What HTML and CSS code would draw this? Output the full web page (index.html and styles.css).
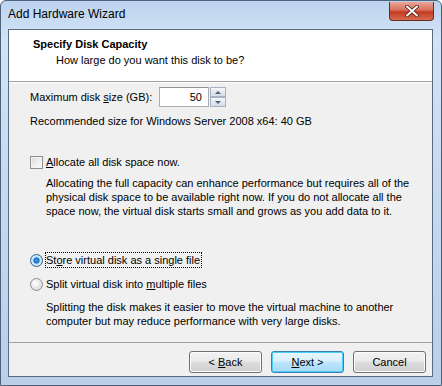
FILE: index.html
```html
<!DOCTYPE html>
<html lang="en">

<head>
    <meta charset="UTF-8">
    <title>Add Hardware Wizard</title>
    <link rel="stylesheet" href="styles.css">
</head>

<body>
    <div class="window">
        <div class="titlebar">
            <span class="title">Add Hardware Wizard</span>
            <div class="closeBtn">
                <svg width="16" height="12" viewBox="0 0 16 12">
                    <path d="M3 1.5 L13 10.5 M13 1.5 L3 10.5" stroke="#4a1410" stroke-width="3.6" stroke-linecap="round" />
                    <path d="M3 1.5 L13 10.5 M13 1.5 L3 10.5" stroke="#ffffff" stroke-width="2" stroke-linecap="round" />
                </svg>
            </div>
        </div>

        <div class="client">
            <div class="header">
                <div class="headerTitle">Specify Disk Capacity</div>
                <div class="headerSub">How large do you want this disk to be?</div>
            </div>

            <div class="contents">
                <div class="sizeRow">
                    <span class="sizeLabel">Maximum disk <u>s</u>ize (GB):</span>
                    <div class="spin">
                        <div class="spinInput">50</div>
                        <div class="spinBtns">
                            <div class="spinBtn"><span class="arrowUp"></span></div>
                            <div class="spinBtn"><span class="arrowDown"></span></div>
                        </div>
                    </div>
                </div>

                <p class="recommend">Recommended size for Windows Server 2008 x64: 40 GB</p>

                <div class="option allocRow">
                    <span class="checkbox"></span>
                    <span><u>A</u>llocate all disk space now.</span>
                </div>
                <p class="desc">Allocating the full capacity can enhance performance but requires all of the
                    physical disk space to be available right now. If you do not allocate all the
                    space now, the virtual disk starts small and grows as you add data to it.</p>

                <div class="option singleRow">
                    <span class="radio checked"></span>
                    <span class="focused">St<u>o</u>re virtual disk as a single file</span>
                </div>
                <div class="option splitRow">
                    <span class="radio"></span>
                    <span>Split virtual disk into <u>m</u>ultiple files</span>
                </div>
                <p class="desc lastDesc">Splitting the disk makes it easier to move the virtual machine to another
                    computer but may reduce performance with very large disks.</p>
            </div>

            <div class="footer">
                <button class="btn">&lt; <u>B</u>ack</button>
                <button class="btn defaultBtn"><u>N</u>ext &gt;</button>
                <button class="btn">Cancel</button>
            </div>
        </div>
    </div>
</body>

</html>
```

FILE: styles.css
```css
body {
    margin: 0;
    font-family: "Liberation Sans", Arial, sans-serif;
    font-size: 11px;
    color: #000;
}

.window {
    width: 442px;
    height: 386px;
    box-sizing: border-box;
    padding: 0 8px 8px 7px;
    background: linear-gradient(180deg, #bcd3ee 0%, #d2e3f6 10%, #c5d9f1 50%, #b9cfea 100%);
    border: 1px solid #4e6178;
    border-radius: 6px 6px 0 0;
    display: flex;
    flex-direction: column;
}

.titlebar {
    height: 28px;
    display: flex;
    align-items: flex-start;
    justify-content: space-between;
}

.title {
    font-family: "Liberation Sans", sans-serif;
    font-size: 12px;
    margin-top: 6px;
}

.closeBtn {
    width: 45px;
    height: 19px;
    margin-top: 1px;
    margin-right: -1px;
    border: 1px solid #6b2a24;
    border-top: none;
    border-radius: 0 0 4px 4px;
    background: linear-gradient(180deg, #e8a598 0%, #d7705d 45%, #c4391f 55%, #d56c4e 100%);
    display: flex;
    align-items: center;
    justify-content: center;
    box-sizing: border-box;
}

.client {
    flex: 1;
    border: 1px solid #5a6b7e;
    background-color: #f0f0f0;
    display: flex;
    flex-direction: column;
}

.header {
    height: 51px;
    background-color: #fff;
    border-bottom: 1px solid #a0a0a0;
    padding-left: 24px;
}

.headerTitle {
    font-weight: bold;
    line-height: 14px;
    margin-top: 7px;
}

.headerSub {
    line-height: 14px;
    margin-top: 2px;
    padding-left: 23px;
}

.contents {
    height: 259px;
    padding-left: 21px;
    border-top: 1px solid #fff;
}

.sizeRow {
    display: flex;
    align-items: center;
    margin-top: 4px;
    height: 20px;
}

.sizeLabel {
    width: 129px;
}

.spin {
    display: flex;
    align-items: stretch;
    height: 20px;
}

.spinInput {
    width: 50px;
    box-sizing: border-box;
    border: 1px solid #abadb3;
    border-top-color: #8e8f8f;
    background-color: #fff;
    text-align: right;
    padding-right: 6px;
    line-height: 18px;
}

.spinBtns {
    display: flex;
    flex-direction: column;
    margin-left: 1px;
    width: 16px;
}

.spinBtn {
    flex: 1;
    border: 1px solid #a8b3c2;
    background: linear-gradient(180deg, #f4f6fa 0%, #e4e9f0 50%, #d6dde7 100%);
    display: flex;
    align-items: center;
    justify-content: center;
}

.arrowUp {
    border-left: 3px solid transparent;
    border-right: 3px solid transparent;
    border-bottom: 3px solid #4d6185;
}

.arrowDown {
    border-left: 3px solid transparent;
    border-right: 3px solid transparent;
    border-top: 3px solid #4d6185;
}

.recommend {
    margin: 7px 0 0;
    line-height: 14px;
}

.option {
    display: flex;
    align-items: center;
    line-height: 14px;
}

.option > span:first-child {
    margin-right: 3px;
}

.allocRow {
    margin-top: 27px;
}

.singleRow {
    margin-top: 35px;
}

.splitRow {
    margin-top: 10px;
}

.checkbox {
    width: 13px;
    height: 13px;
    box-sizing: border-box;
    border: 1px solid #8f8f8f;
    background: linear-gradient(135deg, #dcdcdc 0%, #f0f0f0 60%, #fafafa 100%);
    box-shadow: inset 0 0 0 1px #f4f4f4;
}

.radio {
    width: 13px;
    height: 13px;
    box-sizing: border-box;
    border: 1px solid #8f8f8f;
    border-radius: 50%;
    background: radial-gradient(circle at 40% 40%, #ffffff 0%, #e2e2e2 60%, #cfcfcf 100%);
}

.radio.checked {
    border-color: #2c628b;
    background: radial-gradient(circle at 50% 50%, #3f9ee9 0%, #1c6fb8 35%, #bfe2fb 45%, #e9f5fe 100%);
}

.focused {
    outline: 1px dotted #000;
    outline-offset: 0;
    padding-right: 1px;
}

.desc {
    margin: 7px 0 0;
    padding-left: 16px;
    line-height: 14px;
}

.lastDesc {
    margin-top: 9px;
}

.footer {
    flex: 1;
    border-top: 1px solid #a0a0a0;
    display: flex;
    justify-content: flex-end;
    gap: 9px;
    padding: 8px 6px 0 0;
}

.btn {
    width: 73px;
    height: 22px;
    font-family: "Liberation Sans", Arial, sans-serif;
    font-size: 11px;
    color: #000;
    border: 1px solid #707070;
    border-radius: 3px;
    background: linear-gradient(180deg, #f2f2f2 0%, #ebebeb 45%, #dddddd 50%, #cfcfcf 100%);
    box-shadow: inset 0 0 0 1px #fcfcfc;
    padding: 0;
}

.defaultBtn {
    border-color: #3c7fb1;
    background: linear-gradient(180deg, #eaf6fd 0%, #d9f0fc 45%, #bee6fd 50%, #a7d9f5 100%);
    box-shadow: inset 0 0 0 1px #48d0f8;
}
```
